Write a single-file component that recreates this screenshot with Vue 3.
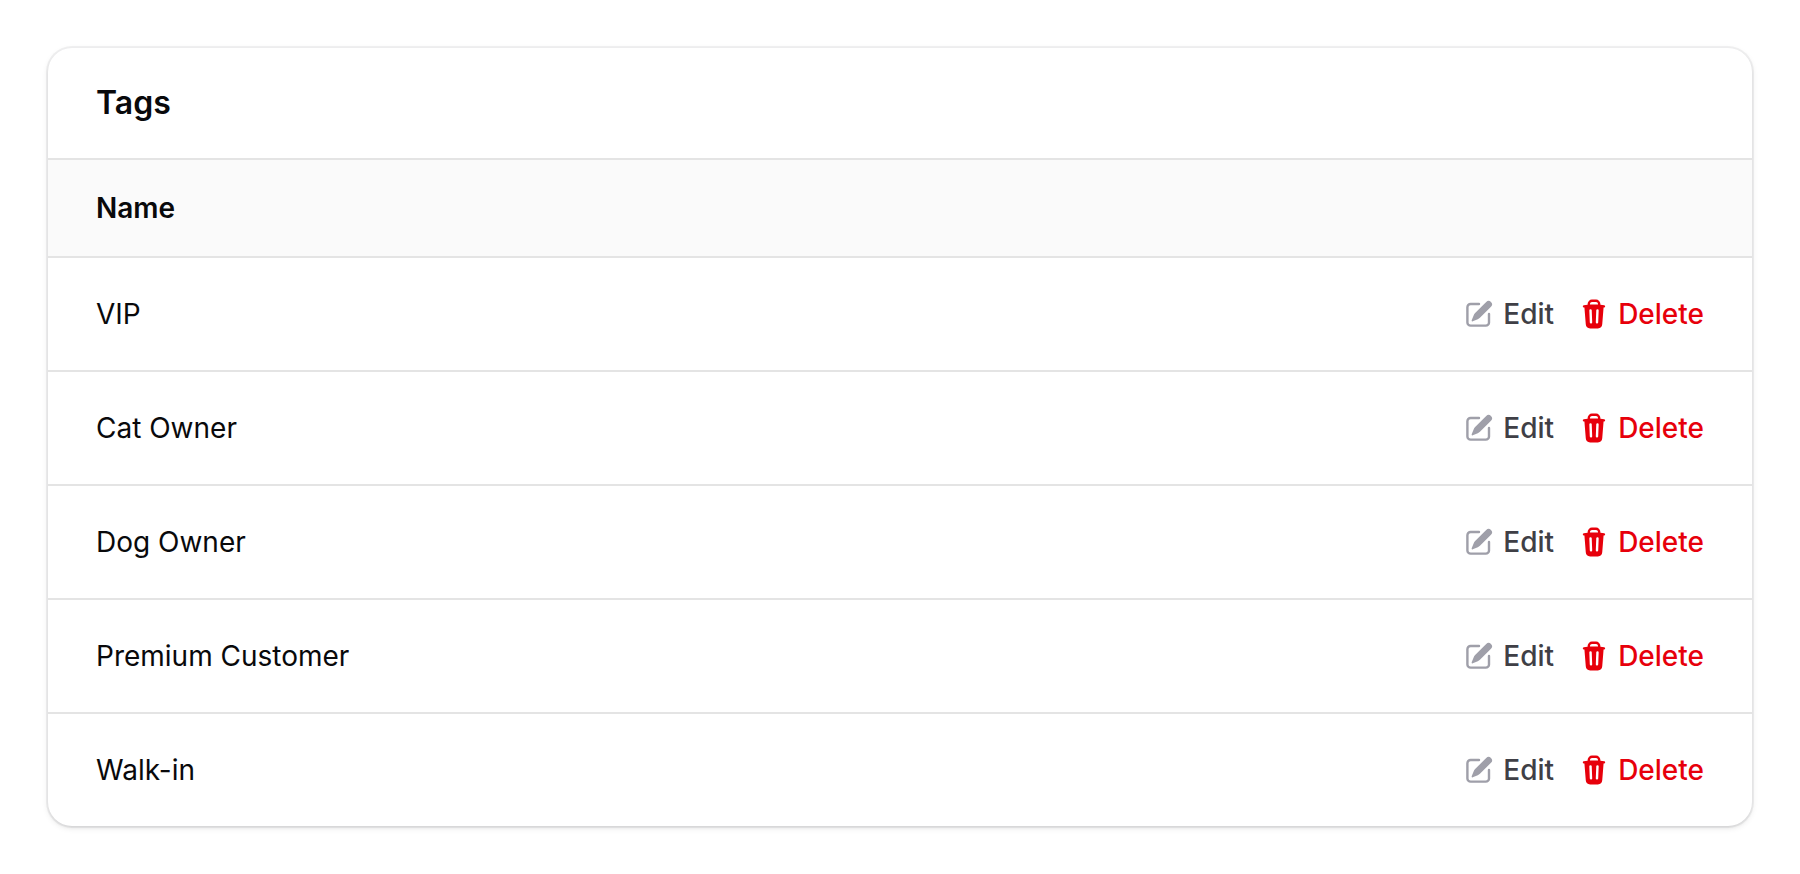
<script setup>
const tags = ['VIP', 'Cat Owner', 'Dog Owner', 'Premium Customer', 'Walk-in']
</script>

<template>
  <main class="page">
    <section class="card" aria-labelledby="tags-heading">
      <header class="card-header">
        <h1 id="tags-heading">Tags</h1>
      </header>
      <table class="table">
        <thead>
          <tr>
            <th scope="col">Name</th>
            <td></td>
          </tr>
        </thead>
        <tbody>
          <tr v-for="tag in tags" :key="tag">
            <td>{{ tag }}</td>
            <td>
              <div class="actions">
                <button type="button" class="action edit">
                  <svg viewBox="0 0 20 20" fill="currentColor" aria-hidden="true">
                    <path d="m5.433 13.917 1.262-3.155A4 4 0 0 1 7.58 9.42l6.92-6.918a2.121 2.121 0 0 1 3 3l-6.92 6.918c-.383.383-.84.685-1.343.886l-3.154 1.262a.5.5 0 0 1-.65-.65Z" />
                    <path d="M3.5 5.75c0-.69.56-1.25 1.25-1.25H10A.75.75 0 0 0 10 3H4.75A2.75 2.75 0 0 0 2 5.75v9.5A2.75 2.75 0 0 0 4.75 18h9.5A2.75 2.75 0 0 0 17 15.25V10a.75.75 0 0 0-1.5 0v5.25c0 .69-.56 1.25-1.25 1.25h-9.5c-.69 0-1.25-.56-1.25-1.25v-9.5Z" />
                  </svg>
                  <span>Edit</span>
                </button>
                <button type="button" class="action delete">
                  <svg viewBox="0 0 20 20" fill="currentColor" aria-hidden="true">
                    <path fill-rule="evenodd" clip-rule="evenodd" d="M8.75 1A2.75 2.75 0 0 0 6 3.75v.443c-.795.077-1.584.176-2.365.298a.75.75 0 1 0 .23 1.482l.149-.022.841 10.518A2.75 2.75 0 0 0 7.596 19h4.807a2.75 2.75 0 0 0 2.742-2.53l.841-10.52.149.023a.75.75 0 0 0 .23-1.482A41.03 41.03 0 0 0 14 4.193V3.75A2.75 2.75 0 0 0 11.25 1h-2.5ZM10 4c.84 0 1.673.025 2.5.075V3.75c0-.69-.56-1.25-1.25-1.25h-2.5c-.69 0-1.25.56-1.25 1.25v.325C8.327 4.025 9.16 4 10 4ZM8.58 7.72a.75.75 0 0 0-1.5.06l.3 7.5a.75.75 0 1 0 1.5-.06l-.3-7.5Zm4.34.06a.75.75 0 1 0-1.5-.06l-.3 7.5a.75.75 0 1 0 1.5.06l.3-7.5Z" />
                  </svg>
                  <span>Delete</span>
                </button>
              </div>
            </td>
          </tr>
        </tbody>
      </table>
    </section>
  </main>
</template>

<style scoped>
.page {
  padding: 48px;
  font-family: Inter, "Liberation Sans", sans-serif;
  font-size: 28px;
  line-height: 48px;
  color: #09090b;
}

.card {
  overflow: hidden;
  border-radius: 24px;
  background: #fff;
  box-shadow:
    0 0 0 2px rgb(9 9 11 / 5%),
    0 2px 6px rgb(0 0 0 / 10%),
    0 2px 4px -2px rgb(0 0 0 / 10%);
}

.card-header {
  padding: 31px 48px;
  border-bottom: 2px solid #e4e4e4;
}

h1 {
  margin: 0;
  font-size: 32px;
  font-weight: 600;
  line-height: 48px;
}

.table {
  width: 100%;
  border-collapse: separate;
  border-spacing: 0;
}

th,
td {
  padding: 32px 48px;
  text-align: left;
}

thead th,
thead td {
  padding-block: 24px;
  background: #fafafa;
  font-weight: 600;
}

tbody td {
  border-top: 2px solid #e4e4e4;
}

.actions {
  display: flex;
  justify-content: flex-end;
  gap: 24px;
}

.action {
  display: flex;
  align-items: center;
  gap: 8px;
  padding: 0;
  border: 0;
  background: none;
  font: inherit;
  font-weight: 500;
  cursor: pointer;
}

.action svg {
  width: 32px;
  height: 32px;
}

.action:hover span {
  text-decoration: underline;
}

.edit {
  color: #3f3f46;
}

.edit svg {
  color: #9f9fa9;
}

.delete {
  color: #e7000b;
}
</style>

<style>
body {
  margin: 0;
  background: #fff;
}
</style>
